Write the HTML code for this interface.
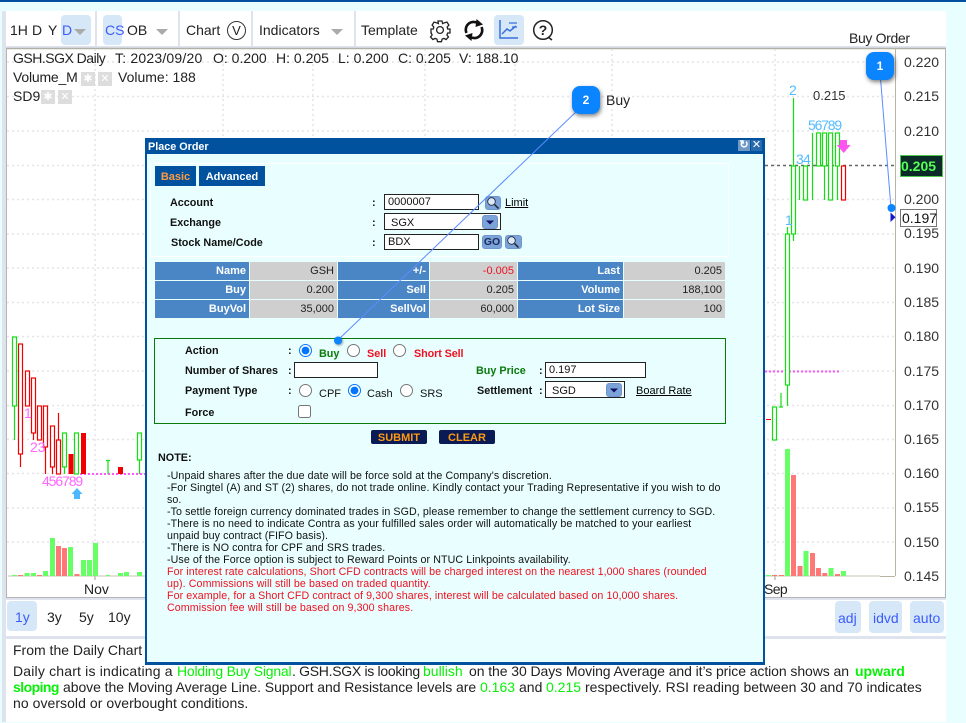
<!DOCTYPE html>
<html><head><meta charset="utf-8"><title>Place Order</title>
<style>
html,body{margin:0;padding:0;width:966px;height:723px;overflow:hidden;background:#e9ffff}
body{position:relative;font-family:"Liberation Sans",sans-serif;color:#222}
.a{position:absolute;white-space:nowrap}
.t{font-size:14px;line-height:16px;color:#222}
.gr{color:#08f008}
.p{font-size:14px;line-height:16px;color:#333;left:904px}
.btn{position:absolute;background:#d6e7f7;border-radius:4px}
.sep{position:absolute;top:11px;height:35px;width:2px;background:#dfe3ee}
.tri{position:absolute;width:0;height:0;border-left:6px solid transparent;border-right:6px solid transparent;border-top:6px solid #aaa}
.blue{color:#3a5cff}
.f{font-size:10.8px;line-height:13px;font-weight:bold;color:#111;margin-top:1px}
.n{font-size:10.67px;line-height:12px;color:#111;left:167px;letter-spacing:.09px;margin-top:1px}
.r{color:#f01020}
.g{color:#0a7a0a}
.th{position:absolute;background:#4a86c5;color:#fff;font-size:11px;font-weight:bold;text-align:right;height:18px;line-height:18px;padding-right:3px;box-sizing:border-box}
.td{position:absolute;background:#cfcfcf;color:#222;font-size:11px;text-align:right;height:18px;line-height:18px;padding-right:3px;box-sizing:border-box}
.inp{position:absolute;background:#fff;border:1px solid #222;box-sizing:border-box;font-size:11px;line-height:15px;color:#111;padding-left:3px;padding-top:1px}
.ic{position:absolute;background:#7ba3d8;border-radius:3px;border:1px solid #6f96cc;box-sizing:border-box}
input{position:absolute;margin:0;width:13px;height:13px;accent-color:#0075ff}
.sb{position:absolute;background:#0a1a55;color:#ff9a10;font-size:11px;font-weight:bold;text-align:center;line-height:17px;height:14px;border-radius:2px;overflow:hidden}
.badge{position:absolute;width:28px;height:28px;background:#0a84ff;border-radius:8px;color:#fff;font-size:12px;font-weight:bold;text-align:center;line-height:28px;box-shadow:1px 2px 4px rgba(0,0,0,.5)}
.lab{font-size:14px;line-height:16px}
.sq{position:absolute;width:14px;height:14px;background:#ddd;color:#fff;font-size:11px;line-height:14px;text-align:center}
</style></head>
<body>
<!-- frame -->
<div class="a" style="left:0;top:0;width:966px;height:2px;background:#00529f"></div>
<div class="a" style="left:2px;top:11px;width:4px;height:711px;background:#dfe3ee"></div>
<div class="a" style="left:6px;top:11px;width:940px;height:711px;background:#fff"></div>
<div class="a" style="left:6px;top:46px;width:940px;height:2px;background:#dfe3ee"></div>
<div class="a" style="left:6px;top:636px;width:940px;height:3px;background:#dfe3ee"></div>
<div class="a" style="left:6px;top:598px;width:940px;height:2px;background:#dfe3ee"></div>
<!-- toolbar -->
<div class="sep" style="left:95px"></div><div class="sep" style="left:178px"></div><div class="sep" style="left:251px"></div><div class="sep" style="left:354px"></div>
<div class="btn" style="left:61px;top:15px;width:30px;height:30px"></div>
<div class="btn" style="left:103px;top:15px;width:19px;height:30px"></div>
<div class="btn" style="left:494px;top:15px;width:30px;height:30px"></div>
<div class="a t" style="left:10px;top:22px">1H</div><div class="a t" style="left:32px;top:22px">D</div><div class="a t" style="left:48px;top:22px">Y</div><div class="a t blue" style="left:62px;top:22px">D</div>
<div class="tri" style="left:74px;top:29px"></div>
<div class="a t blue" style="left:105px;top:22px">CS</div><div class="a t" style="left:127px;top:22px">OB</div>
<div class="tri" style="left:156px;top:29px"></div>
<div class="a t" style="left:186px;top:22px">Chart</div>
<div class="a" style="left:227px;top:20px;width:17px;height:17px;border:1px solid #333;border-radius:50%;font-size:13px;line-height:17px;text-align:center;color:#222;margin-top:1px">V</div>
<div class="a t" style="left:259px;top:22px">Indicators</div>
<div class="tri" style="left:331px;top:29px"></div>
<div class="a t" style="left:361px;top:22px">Template</div>
<svg class="a" style="left:0;top:0" width="966" height="60">
 <g fill="none" stroke="#222" stroke-width="1.3">
  <circle cx="440" cy="30" r="3.4"/>
  <path d="M438 21h4l.6 2.6 2-.9 2.4-.6 1.9 3-1.7 2 .5 1.900h2.300v4h-2.300l-.8 2 1.600 2-2.400 2.600-2.200-1.200-1.900.8-.5 2.500h-4l-.5-2.500-1.900-.8-2.200 1.200-2.400-2.600 1.600-2-.8-2H431v-4h2.300l.5-1.900-1.700-2 1.900-3 2.400.6 2 .9z"/>
 </g>
 <path d="M466.500 33A7.800 7.800 0 0 1 478 23.300" fill="none" stroke="#111" stroke-width="2.600"/>
 <path d="M481.500 27A7.800 7.800 0 0 1 470 36.700" fill="none" stroke="#111" stroke-width="2.600"/>
 <path d="M476.500 19l6.500 5.500-7.500 2.500z" fill="#111"/>
 <path d="M471.500 41l-6.500-5.500 7.500-2.500z" fill="#111"/>
 <path d="M500 20v18h18" fill="none" stroke="#3a6ee0" stroke-width="1.500"/>
 <path d="M502 34l5-5 3 2 6-5" fill="none" stroke="#3a6ee0" stroke-width="1.500"/>
 <path d="M509 23h8M512 27h5" stroke="#3a6ee0" stroke-width="1.300"/>
 <circle cx="543" cy="30" r="9.300" fill="none" stroke="#222" stroke-width="1.500"/>
 <path d="M548 37l4 3" stroke="#222" stroke-width="1.500"/>
 <text x="543" y="35" font-size="14" font-weight="bold" text-anchor="middle" fill="#222" font-family="Liberation Sans">?</text>
</svg>
<!-- chart -->
<svg class="a" style="left:0;top:0" width="966" height="600">
 <path d="M6.500 48.500H945.500V597.500H6.500Z" fill="none" stroke="#b4b4b4"/>
 <path d="M6 48.500H946" stroke="#b0b0a4" stroke-width="1.500"/>
 <g stroke="#e4e4ea" stroke-width="1.500" stroke-dasharray="2 3" fill="none">
  <path d="M7 62H895M7 96.500H895M7 131H895M7 165.500H765M7 199.500H895M7 234H895M7 268H895M7 302.500H895M7 336.500H895M7 371H895M7 405.500H895M7 439.500H895M7 473.500H895M7 508H895M7 542H895"/>
  <path d="M95 49V576M223 49V576M313 49V576M425 49V576M515 49V576M612 49V576M775 49V576"/>
 </g>
 <path d="M895.500 48V576M880 576.500H895" stroke="#b8b4a0" fill="none"/>
 <path d="M765 165.500H895" stroke="#666" stroke-width="1.500" stroke-dasharray="3 3"/>
 <path d="M80 474H146" stroke="#ff55ff" stroke-width="2" stroke-dasharray="2 2"/>
 <path d="M765 371.500H840" stroke="#ff55ff" stroke-width="2" stroke-dasharray="2 2"/>
 <path d="M95 576v4M775 576v4" stroke="#a09a80"/>
 <path d="M8 576H146M765 576H880" stroke="#c8c4b0"/>
 <!-- volume -->
 <g fill="#66ff66">
  <rect x="12" y="575" width="5" height="1"/><rect x="24.500" y="573" width="5" height="3"/><rect x="31" y="573" width="5" height="3"/><rect x="43" y="571" width="5" height="5"/><rect x="50" y="538" width="5" height="38"/><rect x="68" y="547" width="5" height="29"/><rect x="81" y="560" width="5" height="16"/><rect x="87" y="560" width="5" height="16"/><rect x="93" y="543" width="5" height="33"/><rect x="106" y="575" width="4" height="1"/><rect x="118" y="573" width="5" height="3"/><rect x="124" y="572" width="5" height="4"/><rect x="137" y="572" width="5" height="4"/>
  <rect x="766" y="575" width="5" height="1"/><rect x="785" y="449" width="5" height="127"/><rect x="803.500" y="551" width="5" height="25"/><rect x="828.500" y="568" width="5" height="8"/><rect x="841" y="571" width="5" height="5"/>
 </g>
 <g fill="#ff7777">
  <rect x="18" y="575" width="5" height="1"/><rect x="37" y="575" width="5" height="1"/><rect x="56" y="546" width="5" height="30"/><rect x="62" y="548" width="5" height="28"/><rect x="74.500" y="574" width="5" height="2"/>
  <rect x="772" y="575" width="5" height="1"/><rect x="779" y="575" width="5" height="1"/><rect x="791" y="475" width="5" height="101"/><rect x="797.500" y="566" width="5" height="10"/><rect x="810" y="553" width="5" height="23"/><rect x="816" y="568" width="5" height="8"/><rect x="822.300" y="573" width="5" height="3"/><rect x="835" y="574" width="5" height="2"/>
 </g>
 <!-- candles green -->
 <g fill="#fff" stroke="#10e010" stroke-width="1.200">
  <path d="M14.500 406V440M64.500 467V474M108 460V474M106 460.500H110M139.500 460V474M781 393V407M779 407H783M787.500 227V234M787.500 385V406M793.500 98V241M799.500 166V200M812.500 133V200M824.500 166V200M837.500 166V200" fill="none"/>
  <rect x="12.500" y="337" width="4" height="69"/><rect x="62.500" y="433" width="4" height="34"/><rect x="74.500" y="433" width="4" height="41"/><rect x="137.500" y="433" width="4" height="27"/>
  <rect x="772.500" y="407" width="4" height="33"/><rect x="785.500" y="234" width="4" height="151"/><rect x="791.500" y="166" width="4" height="68"/><rect x="803.500" y="166" width="4" height="34"/><rect x="816.500" y="133" width="4" height="33"/><rect x="822.500" y="133" width="4" height="33"/><rect x="828.500" y="133" width="4" height="67"/><rect x="835.500" y="133" width="4" height="33"/>
 </g>
 <!-- candles red -->
 <g fill="#fff" stroke="#f00000" stroke-width="1.200">
  <path d="M20.500 454V467M33.500 433V440M45.500 447V474M52.500 467V474M58.500 413V440" fill="none"/>
  <rect x="18.500" y="344" width="4" height="110"/><rect x="25.500" y="371" width="4" height="35"/><rect x="31.500" y="378" width="4" height="55"/><rect x="37.500" y="406" width="4" height="34"/><rect x="43.500" y="406" width="4" height="41"/><rect x="50.500" y="426" width="4" height="41"/><rect x="56.500" y="440" width="4" height="34"/>
  <rect x="841.500" y="166" width="4" height="34"/>
 </g>
 <g fill="#f00000">
  <rect x="68.500" y="454" width="5" height="20"/><rect x="81" y="433" width="5" height="41"/><rect x="118" y="467" width="5" height="7"/>
  <rect x="766" y="419" width="5" height="1"/>
 </g>
 <path d="M77 488l5.500 6H80v5h-6v-5h-2.500z" fill="#4db8ff"/>
 <path d="M840 140h7v5h3.700l-7 8-7-8h3.300z" fill="#ff55ee"/>
 <path d="M890.500 212.500l5 4.700-5 4.800z" fill="#1018d0"/>
</svg>
<div class="a" style="left:24px;top:405px;font-size:14px;line-height:16px;color:#ff66ff">1</div>
<div class="a" style="left:30px;top:439px;font-size:14px;line-height:16px;color:#ff66ff">23</div>
<div class="a" style="left:42px;top:473px;font-size:14px;line-height:16px;color:#ff66ff;letter-spacing:-1.100px">456789</div>
<div class="a" style="left:785px;top:212px;font-size:14px;line-height:16px;color:#55bbff">1</div>
<div class="a" style="left:789px;top:82px;font-size:14px;line-height:16px;color:#55bbff">2</div>
<div class="a" style="left:796px;top:151px;font-size:14px;line-height:16px;color:#55bbff;letter-spacing:-.8px">34</div>
<div class="a" style="left:808px;top:117px;font-size:14px;line-height:16px;color:#55bbff;letter-spacing:-1.200px">56789</div>
<div class="a" style="left:813px;top:88px;font-size:13px;line-height:16px;color:#333">0.215</div>
<div class="a t" style="left:84px;top:581px">Nov</div><div class="a t" style="left:764px;top:581px;letter-spacing:-.6px">Sep</div>
<!-- chart legend -->
<div class="a t" style="left:13px;top:50px;letter-spacing:-.5px">GSH.SGX Daily</div>
<div class="a t" style="left:115px;top:50px;letter-spacing:.2px">T: 2023/09/20</div>
<div class="a t" style="left:213px;top:50px">O: 0.200</div>
<div class="a t" style="left:276px;top:50px">H: 0.205</div>
<div class="a t" style="left:338px;top:50px">L: 0.200</div>
<div class="a t" style="left:398px;top:50px">C: 0.205</div>
<div class="a t" style="left:459px;top:50px">V: 188.10</div>
<div class="a t" style="left:13px;top:69px;letter-spacing:-.2px">Volume_M</div>
<div class="sq" style="left:81px;top:72px">✱</div><div class="sq" style="left:98px;top:72px">✕</div>
<div class="a t" style="left:118px;top:69px">Volume: 188</div>
<div class="a t" style="left:13px;top:88px">SD9</div>
<div class="sq" style="left:41px;top:90px">✱</div><div class="sq" style="left:58px;top:90px">✕</div>
<!-- price axis -->
<div class="a p" style="top:54px">0.220</div><div class="a p" style="top:88px">0.215</div><div class="a p" style="top:123px">0.210</div>
<div class="a p" style="top:191px">0.200</div><div class="a p" style="top:225px">0.195</div><div class="a p" style="top:260px">0.190</div>
<div class="a p" style="top:294px">0.185</div><div class="a p" style="top:328px">0.180</div><div class="a p" style="top:363px">0.175</div>
<div class="a p" style="top:397px">0.170</div><div class="a p" style="top:431px">0.165</div><div class="a p" style="top:465px">0.160</div>
<div class="a p" style="top:499px">0.155</div><div class="a p" style="top:534px">0.150</div><div class="a p" style="top:568px">0.145</div>
<div class="a" style="left:900px;top:155px;width:43px;height:22px;box-sizing:border-box;background:#0c2a28;border:1px solid #4cc84c;color:#55ff55;font-size:14px;font-weight:bold;line-height:20px;text-align:left">0.205</div>
<div class="a" style="left:900px;top:209px;width:37px;height:18px;box-sizing:border-box;background:#fff;border:1px solid #777;color:#111;font-size:14px;line-height:16px;padding-left:1px">0.197</div>
<div class="a t" style="left:849px;top:30px;color:#222;letter-spacing:-.35px">Buy Order</div>
<!-- range bar -->
<div class="btn" style="left:7px;top:601px;width:30px;height:30px"></div>
<div class="a t blue" style="left:15px;top:609px">1y</div><div class="a t" style="left:47px;top:609px">3y</div><div class="a t" style="left:79px;top:609px">5y</div><div class="a t" style="left:108px;top:609px">10y</div>
<div class="btn" style="left:835px;top:601px;width:26px;height:32px"></div><div class="btn" style="left:869px;top:601px;width:33px;height:32px"></div><div class="btn" style="left:910px;top:601px;width:34px;height:32px"></div>
<div class="a t blue" style="left:838px;top:610px">adj</div><div class="a t blue" style="left:873px;top:610px">idvd</div><div class="a t blue" style="left:913px;top:610px">auto</div>
<!-- analysis -->
<div class="a t" style="left:13px;top:642px">From the Daily Chart</div>
<div class="a t" style="left:13px;top:663px;letter-spacing:.18px">Daily chart is indicating a</div>
<div class="a t gr" style="left:177px;top:663px;letter-spacing:-.22px">Holding Buy Signal</div>
<div class="a t" style="left:292px;top:663px;letter-spacing:-.3px">. GSH.SGX is looking</div>
<div class="a t gr" style="left:423px;top:663px">bullish</div>
<div class="a t" style="left:469px;top:663px;letter-spacing:-.08px">on the 30 Days Moving Average and it’s price action shows an</div>
<div class="a t gr" style="left:855px;top:663px;font-weight:bold">upward</div>
<div class="a t gr" style="left:13px;top:679px;font-weight:bold;letter-spacing:-.55px">sloping</div>
<div class="a t" style="left:63px;top:679px;letter-spacing:-.06px">above the Moving Average Line. Support and Resistance levels are</div>
<div class="a t gr" style="left:480px;top:679px">0.163</div>
<div class="a t" style="left:519px;top:679px">and</div>
<div class="a t gr" style="left:546px;top:679px">0.215</div>
<div class="a t" style="left:585px;top:679px">respectively. RSI reading between 30 and 70 indicates</div>
<div class="a t" style="left:13px;top:695px;letter-spacing:.05px">no oversold or overbought conditions.</div>
<!-- dialog -->
<div class="a" style="left:145px;top:138px;width:620px;height:527px;box-sizing:border-box;background:#e9ffff;border:2px solid #00529f;border-width:0 2px 3px 2px"></div>
<div class="a" style="left:145px;top:138px;width:620px;height:16px;background:#00529f;color:#fff;font-size:10.800px;font-weight:bold;line-height:18px;padding-left:3px;box-sizing:border-box;overflow:hidden">Place Order</div>
<div class="a" style="left:738px;top:140px;width:12px;height:11px;color:#fff;font-size:11px;line-height:11px;text-align:center;font-weight:bold;background:#6f9ac5">↻</div>
<div class="a" style="left:751px;top:140px;width:11px;height:11px;color:#fff;font-size:11px;line-height:11px;text-align:center;background:#2a6bad">✕</div>
<div class="a" style="left:150px;top:163px;width:579px;height:94px;box-sizing:border-box;border:1px solid #fff"></div>
<div class="a" style="left:155px;top:166px;width:41px;height:20px;background:#00529f;color:#ff9a40;font-size:11px;font-weight:bold;line-height:22px;text-align:center;overflow:hidden">Basic</div>
<div class="a" style="left:199px;top:166px;width:66px;height:20px;background:#00529f;color:#fff;font-size:11px;font-weight:bold;line-height:22px;text-align:center;overflow:hidden">Advanced</div>
<div class="a f" style="left:170px;top:196px">Account</div><div class="a f" style="left:372px;top:196px">:</div>
<div class="a f" style="left:170px;top:216px">Exchange</div><div class="a f" style="left:372px;top:216px">:</div>
<div class="a f" style="left:171px;top:236px">Stock Name/Code</div><div class="a f" style="left:372px;top:236px">:</div>
<div class="inp" style="left:384px;top:194px;width:95px;height:16px;padding-top:0;line-height:15px">0000007</div>
<div class="inp" style="left:384px;top:213px;width:117px;height:17px;padding-left:6px;line-height:16px">SGX</div>
<div class="ic" style="left:482px;top:215px;width:16px;height:14px"></div>
<svg class="a" style="left:482px;top:215px" width="16" height="14"><path d="M4 5.500h8l-4 4z" fill="#11116a"/></svg>
<div class="inp" style="left:384px;top:234px;width:95px;height:16px;padding-top:0;line-height:15px">BDX</div>
<div class="ic" style="left:485px;top:196px;width:16px;height:14px"></div>
<div class="ic" style="left:482px;top:235px;width:20px;height:14px;color:#1a2a5a;font-size:10.500px;font-weight:bold;line-height:12px;text-align:center">GO</div>
<div class="ic" style="left:505px;top:235px;width:17px;height:14px"></div>
<svg class="a" style="left:485px;top:196px" width="16" height="14"><circle cx="6.500" cy="5.500" r="3.800" fill="#dce9f8" stroke="#223" stroke-width=".8"/><path d="M9.500 8.500l4 4" stroke="#223" stroke-width="1.500"/></svg>
<svg class="a" style="left:505px;top:235px" width="17" height="14"><circle cx="6.500" cy="5.500" r="3.800" fill="#dce9f8" stroke="#223" stroke-width=".8"/><path d="M9.500 8.500l4 4" stroke="#223" stroke-width="1.500"/></svg>
<div class="a f" style="left:505px;top:196px;text-decoration:underline;font-weight:normal;color:#000;font-size:11px">Limit</div>
<!-- table -->
<div class="th" style="left:155px;top:262px;width:94px">Name</div><div class="td" style="left:250px;top:262px;width:87px">GSH</div><div class="th" style="left:338px;top:262px;width:91px">+/-</div><div class="td" style="left:430px;top:262px;width:87px;color:#f01020">-0.005</div><div class="th" style="left:518px;top:262px;width:105px">Last</div><div class="td" style="left:624px;top:262px;width:101px">0.205</div>
<div class="th" style="left:155px;top:281px;width:94px">Buy</div><div class="td" style="left:250px;top:281px;width:87px">0.200</div><div class="th" style="left:338px;top:281px;width:91px">Sell</div><div class="td" style="left:430px;top:281px;width:87px">0.205</div><div class="th" style="left:518px;top:281px;width:105px">Volume</div><div class="td" style="left:624px;top:281px;width:101px">188,100</div>
<div class="th" style="left:155px;top:300px;width:94px">BuyVol</div><div class="td" style="left:250px;top:300px;width:87px">35,000</div><div class="th" style="left:338px;top:300px;width:91px">SellVol</div><div class="td" style="left:430px;top:300px;width:87px">60,000</div><div class="th" style="left:518px;top:300px;width:105px">Lot Size</div><div class="td" style="left:624px;top:300px;width:101px">100</div>
<!-- action -->
<div class="a" style="left:154px;top:338px;width:572px;height:86px;box-sizing:border-box;border:1px solid #0a7a0a"></div>
<div class="a f" style="left:185px;top:344px">Action</div><div class="a f" style="left:288px;top:344px">:</div>
<input type="radio" name="a" checked style="left:299px;top:344px"><div class="a f g" style="left:319px;top:347px">Buy</div>
<input type="radio" name="a" style="left:347px;top:344px"><div class="a f r" style="left:367px;top:347px">Sell</div>
<input type="radio" name="a" style="left:393px;top:344px"><div class="a f r" style="left:414px;top:347px;letter-spacing:-.1px">Short Sell</div>
<div class="a f" style="left:185px;top:364px">Number of Shares</div><div class="a f" style="left:288px;top:364px">:</div>
<div class="inp" style="left:294px;top:362px;width:84px;height:16px"></div>
<div class="a f g" style="left:476px;top:364px">Buy Price</div><div class="a f" style="left:539px;top:364px">:</div>
<div class="inp" style="left:545px;top:362px;width:101px;height:16px;padding-top:0;line-height:15px">0.197</div>
<div class="a f" style="left:185px;top:384px">Payment Type</div><div class="a f" style="left:288px;top:384px">:</div>
<input type="radio" name="b" style="left:299px;top:384px"><div class="a f" style="left:319px;top:387px;font-weight:normal;font-size:11px">CPF</div>
<input type="radio" name="b" checked style="left:348px;top:384px"><div class="a f" style="left:367px;top:387px;font-weight:normal;font-size:11px">Cash</div>
<input type="radio" name="b" style="left:400px;top:384px"><div class="a f" style="left:420px;top:387px;font-weight:normal;font-size:11px">SRS</div>
<div class="a f" style="left:477px;top:384px">Settlement</div><div class="a f" style="left:539px;top:384px">:</div>
<div class="inp" style="left:545px;top:381px;width:80px;height:17px;padding-left:6px;line-height:16px">SGD</div>
<div class="ic" style="left:606px;top:383px;width:16px;height:14px"></div>
<svg class="a" style="left:606px;top:383px" width="16" height="14"><path d="M4 5.500h8l-4 4z" fill="#11116a"/></svg>
<div class="a f" style="left:636px;top:384px;font-weight:normal;font-size:11px;text-decoration:underline;color:#000">Board Rate</div>
<div class="a f" style="left:185px;top:406px">Force</div>
<input type="checkbox" style="left:298px;top:405px">
<div class="sb" style="left:371px;top:430px;width:56px">SUBMIT</div>
<div class="sb" style="left:439px;top:430px;width:56px">CLEAR</div>
<div class="a f" style="left:158px;top:451px">NOTE:</div>
<div class="a n" style="top:469px">-Unpaid shares after the due date will be force sold at the Company's discretion.</div>
<div class="a n" style="top:481px">-For Singtel (A) and ST (2) shares, do not trade online. Kindly contact your Trading Representative if you wish to do</div>
<div class="a n" style="top:493px">so.</div>
<div class="a n" style="top:505px">-To settle foreign currency dominated trades in SGD, please remember to change the settlement currency to SGD.</div>
<div class="a n" style="top:517px">-There is no need to indicate Contra as your fulfilled sales order will automatically be matched to your earliest</div>
<div class="a n" style="top:529px">unpaid buy contract (FIFO basis).</div>
<div class="a n" style="top:541px">-There is NO contra for CPF and SRS trades.</div>
<div class="a n" style="top:553px">-Use of the Force option is subject to Reward Points or NTUC Linkpoints availability.</div>
<div class="a n r" style="top:565px">For interest rate calculations, Short CFD contracts will be charged interest on the nearest 1,000 shares (rounded</div>
<div class="a n r" style="top:577px">up). Commissions will still be based on traded quantity.</div>
<div class="a n r" style="top:589px">For example, for a Short CFD contract of 9,300 shares, interest will be calculated based on 10,000 shares.</div>
<div class="a n r" style="top:601px">Commission fee will still be based on 9,300 shares.</div>
<!-- annotations -->
<svg class="a" style="left:0;top:0" width="966" height="723">
 <path d="M880 72L891 208" stroke="#5b8cff" stroke-width="1"/>
 <path d="M578 110L338 340" stroke="#5b8cff" stroke-width="1"/>
 <circle cx="891.500" cy="208" r="4" fill="#0a84ff"/>
 <circle cx="338" cy="340.500" r="4" fill="#0a84ff" style="filter:drop-shadow(1px 1px 1px rgba(0,0,0,.4))"/>
</svg>
<div class="badge" style="left:866px;top:52px">1</div>
<div class="badge" style="left:572px;top:86px">2</div>
<div class="a lab" style="left:606px;top:92px;color:#222">Buy</div>
</body></html>
